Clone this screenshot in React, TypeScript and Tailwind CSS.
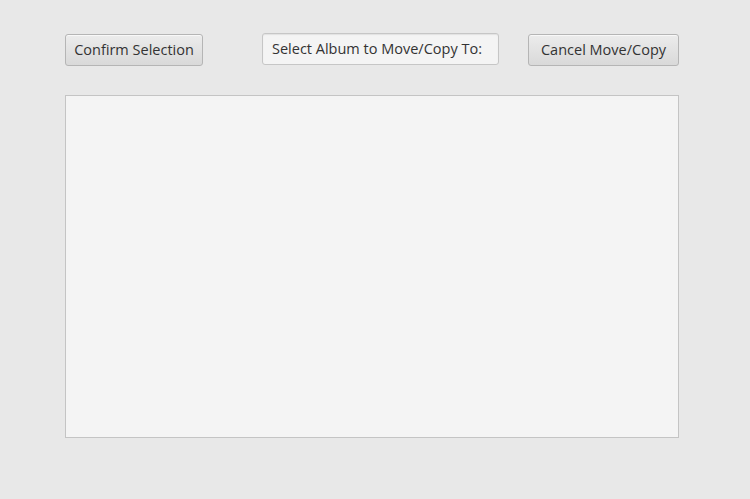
import React from "react";

const btn =
  "h-[32px] rounded-[3px] border border-[#b5b5b5] bg-gradient-to-b from-[#ececec] to-[#d9d9d9] px-[8px] text-[14.5px] text-[#333333] shadow-[inset_0_1px_0_#f8f8f8]";

export default function App() {
  return (
    <div
      className="h-[499px] w-[750px] bg-[#e8e8e8] pl-[65px] pt-[34px]"
      style={{ fontFamily: '"Open Sans", "Noto Sans", sans-serif' }}
    >
      <div className="flex w-[614px] items-start">
        <button className={`${btn} w-[138px]`}>Confirm Selection</button>
        <div className="ml-[59px] mt-[-1px] flex h-[32px] w-[237px] items-center rounded-[3px] border border-[#c6c6c6] bg-[#f4f4f4] px-[9px] text-[14.5px] text-[#333333] shadow-[inset_0_1px_1px_#e2e2e2]">
          Select Album to Move/Copy To:
        </div>
        <button className={`${btn} ml-[29px] w-[151px]`}>Cancel Move/Copy</button>
      </div>
      <div className="mt-[29px] h-[343px] w-[614px] border border-[#c4c4c4] bg-[#f4f4f4]" />
    </div>
  );
}
